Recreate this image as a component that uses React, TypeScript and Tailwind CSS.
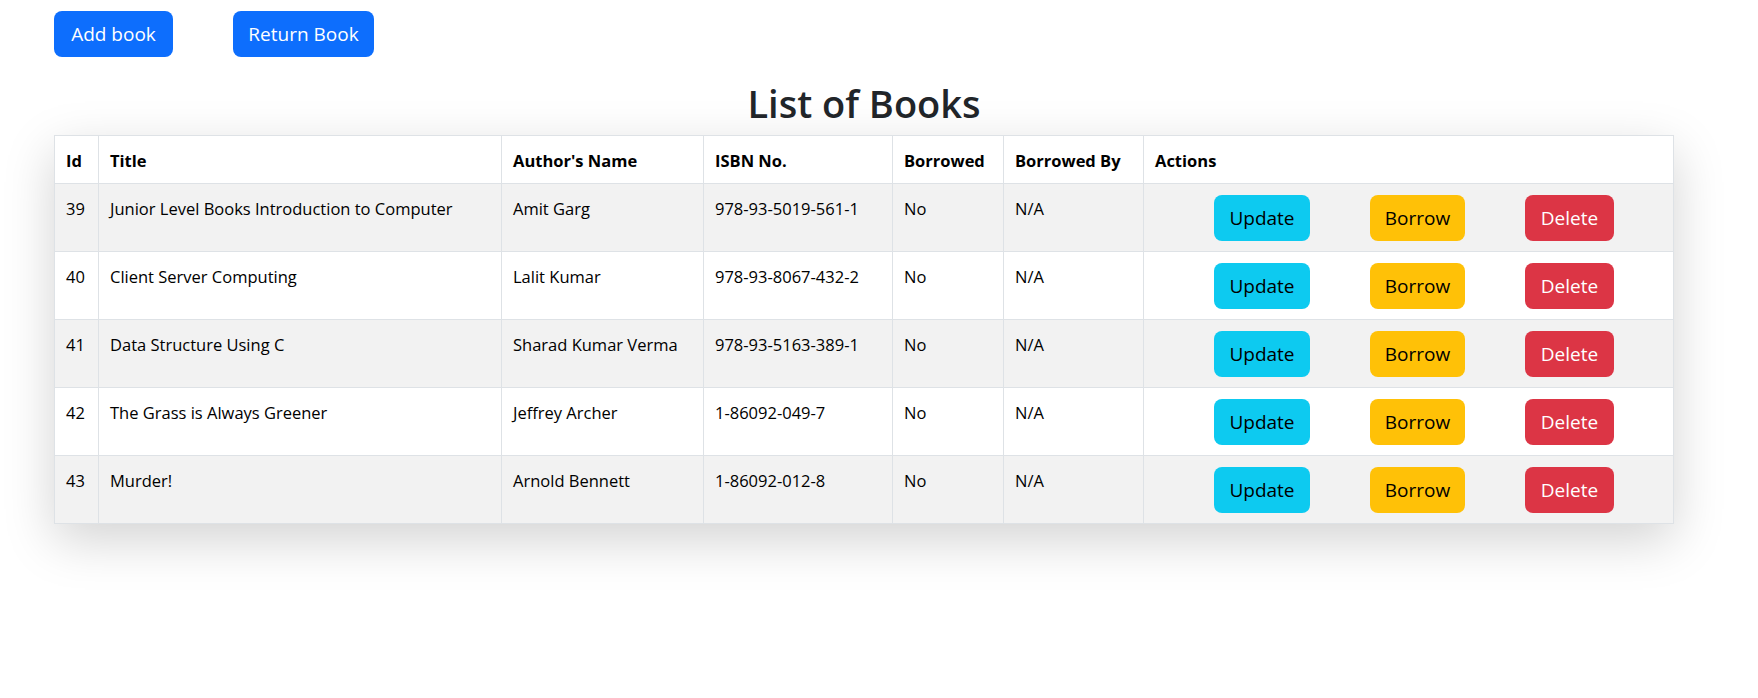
import React from 'react';

interface Book {
  id: number;
  title: string;
  author: string;
  isbn: string;
  borrowed: string;
  borrowedBy: string;
}

const books: Book[] = [
  { id: 39, title: 'Junior Level Books Introduction to Computer', author: 'Amit Garg', isbn: '978-93-5019-561-1', borrowed: 'No', borrowedBy: 'N/A' },
  { id: 40, title: 'Client Server Computing', author: 'Lalit Kumar', isbn: '978-93-8067-432-2', borrowed: 'No', borrowedBy: 'N/A' },
  { id: 41, title: 'Data Structure Using C', author: 'Sharad Kumar Verma', isbn: '978-93-5163-389-1', borrowed: 'No', borrowedBy: 'N/A' },
  { id: 42, title: 'The Grass is Always Greener', author: 'Jeffrey Archer', isbn: '1-86092-049-7', borrowed: 'No', borrowedBy: 'N/A' },
  { id: 43, title: 'Murder!', author: 'Arnold Bennett', isbn: '1-86092-012-8', borrowed: 'No', borrowedBy: 'N/A' },
];

const th = 'border border-[#dee2e6] px-[11px] pt-[12px] pb-[10px] leading-[25px] align-top text-left font-bold';
const td = 'border border-[#dee2e6] px-[11px] pt-[13px] pb-[8px] align-top text-left';

const App: React.FC = () => {
  return (
    <div className="min-h-screen bg-white font-['Open_Sans',sans-serif] text-[#212529]">
      {/* Top actions */}
      <div className="flex gap-[60px] pl-[54px] pt-[11px]">
        <button className="h-[46px] w-[119px] rounded-[8px] bg-[#0d6efd] text-[19px] text-white">
          Add book
        </button>
        <button className="h-[46px] w-[141px] rounded-[8px] bg-[#0d6efd] text-[19px] text-white">
          Return Book
        </button>
      </div>

      <div className="ml-[54px] w-[1620px]">
        <h1 className="mt-[22px] mb-[8px] text-center text-[38px] leading-[48px] font-semibold">List of Books</h1>

        <table className="w-full border-collapse text-[16.5px] leading-[24px] text-black shadow-[0_16px_48px_rgba(0,0,0,0.175)]">
          <thead>
            <tr className="bg-white">
              <th className={`${th} w-[44px]`}>Id</th>
              <th className={`${th} w-[403px]`}>Title</th>
              <th className={`${th} w-[202px]`}>Author's Name</th>
              <th className={`${th} w-[189px]`}>ISBN No.</th>
              <th className={`${th} w-[111px]`}>Borrowed</th>
              <th className={`${th} w-[140px]`}>Borrowed By</th>
              <th className={th}>Actions</th>
            </tr>
          </thead>
          <tbody>
            {books.map((book, i) => (
              <tr key={book.id} className={i % 2 === 0 ? 'bg-[#f2f2f2]' : 'bg-white'}>
                <td className={td}>{book.id}</td>
                <td className={td}>{book.title}</td>
                <td className={td}>{book.author}</td>
                <td className={td}>{book.isbn}</td>
                <td className={td}>{book.borrowed}</td>
                <td className={td}>{book.borrowedBy}</td>
                <td className="border border-[#dee2e6] px-[11px] pt-[11px] pb-[10px] align-top">
                  <div className="flex gap-[60px] pl-[59px]">
                    <button className="h-[46px] w-[96px] rounded-[8px] bg-[#0dcaf0] text-[19px] text-black">
                      Update
                    </button>
                    <button className="h-[46px] w-[95px] rounded-[8px] bg-[#ffc107] text-[19px] text-black">
                      Borrow
                    </button>
                    <button className="h-[46px] w-[89px] rounded-[8px] bg-[#dc3545] text-[19px] text-white">
                      Delete
                    </button>
                  </div>
                </td>
              </tr>
            ))}
          </tbody>
        </table>
      </div>
    </div>
  );
};

export default App;
